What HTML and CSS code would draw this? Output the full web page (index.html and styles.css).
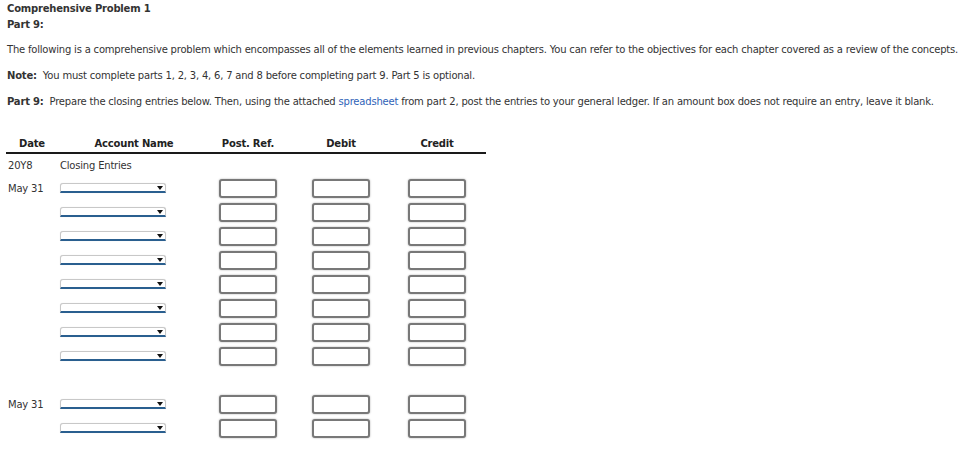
FILE: index.html
```html
<!DOCTYPE html>
<html>
<head>
<meta charset="utf-8">
<link rel="stylesheet" href="styles.css">
</head>
<body>
<div class="intro">
  <div class="title">Comprehensive Problem 1</div>
  <div class="part">Part 9:</div>
  <p class="para">The following is a comprehensive problem which encompasses all of the elements learned in previous chapters. You can refer to the objectives for each chapter covered as a review of the concepts.</p>
  <p class="para"><b>Note:</b>&nbsp; You must complete parts 1, 2, 3, 4, 6, 7 and 8 before completing part 9. Part 5 is optional.</p>
  <p class="para"><b>Part 9:</b>&nbsp; Prepare the closing entries below. Then, using the attached <a class="link" href="#">spreadsheet</a> from part 2, post the entries to your general ledger. If an amount box does not require an entry, leave it blank.</p>
</div>

<div class="ledger">
  <div class="row head">
    <div>Date</div><div>Account Name</div><div>Post. Ref.</div><div>Debit</div><div>Credit</div>
  </div>
  <div class="row sub">
    <div class="date">20Y8</div><div class="acct">Closing Entries</div><div></div><div></div><div></div>
  </div>

  <div class="row entry"><div class="date">May 31</div><div class="acct"><span class="dd"><span class="arrow"></span></span></div><div><input class="amt"></div><div><input class="amt"></div><div><input class="amt"></div></div>
  <div class="row entry"><div class="date"></div><div class="acct"><span class="dd"><span class="arrow"></span></span></div><div><input class="amt"></div><div><input class="amt"></div><div><input class="amt"></div></div>
  <div class="row entry"><div class="date"></div><div class="acct"><span class="dd"><span class="arrow"></span></span></div><div><input class="amt"></div><div><input class="amt"></div><div><input class="amt"></div></div>
  <div class="row entry"><div class="date"></div><div class="acct"><span class="dd"><span class="arrow"></span></span></div><div><input class="amt"></div><div><input class="amt"></div><div><input class="amt"></div></div>
  <div class="row entry"><div class="date"></div><div class="acct"><span class="dd"><span class="arrow"></span></span></div><div><input class="amt"></div><div><input class="amt"></div><div><input class="amt"></div></div>
  <div class="row entry"><div class="date"></div><div class="acct"><span class="dd"><span class="arrow"></span></span></div><div><input class="amt"></div><div><input class="amt"></div><div><input class="amt"></div></div>
  <div class="row entry"><div class="date"></div><div class="acct"><span class="dd"><span class="arrow"></span></span></div><div><input class="amt"></div><div><input class="amt"></div><div><input class="amt"></div></div>
  <div class="row entry"><div class="date"></div><div class="acct"><span class="dd"><span class="arrow"></span></span></div><div><input class="amt"></div><div><input class="amt"></div><div><input class="amt"></div></div>

  <div class="row entry"></div>

  <div class="row entry"><div class="date">May 31</div><div class="acct"><span class="dd"><span class="arrow"></span></span></div><div><input class="amt"></div><div><input class="amt"></div><div><input class="amt"></div></div>
  <div class="row entry"><div class="date"></div><div class="acct"><span class="dd"><span class="arrow"></span></span></div><div><input class="amt"></div><div><input class="amt"></div><div><input class="amt"></div></div>
</div>
</body>
</html>
```

FILE: styles.css
```css
html, body {
  margin: 0;
  padding: 0;
  background: #fff;
}
body {
  padding-top: 1px;
  font-family: "DejaVu Sans", Verdana, sans-serif;
  font-size: 10px;
  letter-spacing: -0.2px;
  color: #333;
}
.intro {
  padding-left: 7px;
}
.title, .part {
  font-weight: bold;
  line-height: 16px;
}
.para {
  margin: 10px 0 0 0;
  line-height: 16px;
  white-space: nowrap;
}
.intro .part + .para {
  margin-top: 9px;
}
.link {
  color: #2f63b8;
  text-decoration: none;
}
.ledger {
  margin: 24px 0 0 6px;
  width: 480px;
}
.row {
  display: grid;
  grid-template-columns: 52px 152px 76px 110px 82px;
  align-items: center;
}
.head {
  height: 18px;
  border-bottom: 2px solid #1a1a1a;
  font-weight: bold;
  text-align: center;
  color: #222;
}
.sub {
  height: 22px;
}
.entry {
  height: 24px;
}
.date {
  padding-left: 2px;
}
.acct {
  padding-left: 2px;
}
.entry > div:nth-child(n+3) {
  display: flex;
  justify-content: center;
}
.amt {
  box-sizing: border-box;
  width: 58px;
  height: 19px;
  margin: 0;
  padding: 0;
  border: 2px solid #787878;
  border-radius: 3px;
  background: #fff;
  box-shadow: 0 0 2px rgba(0,0,0,0.35);
}
.dd {
  position: relative;
  display: block;
  box-sizing: border-box;
  width: 106px;
  height: 10px;
  border: 1px solid #c8c8c8;
  border-bottom: 2px solid #2a5f8f;
  border-radius: 3px 3px 0 0;
  background: #fff;
  box-shadow: 0 0 1px rgba(0,0,0,0.15);
}
.arrow {
  position: absolute;
  right: 2px;
  top: 2px;
  width: 0;
  height: 0;
  border-left: 3px solid transparent;
  border-right: 3px solid transparent;
  border-top: 4px solid #111;
}
```
